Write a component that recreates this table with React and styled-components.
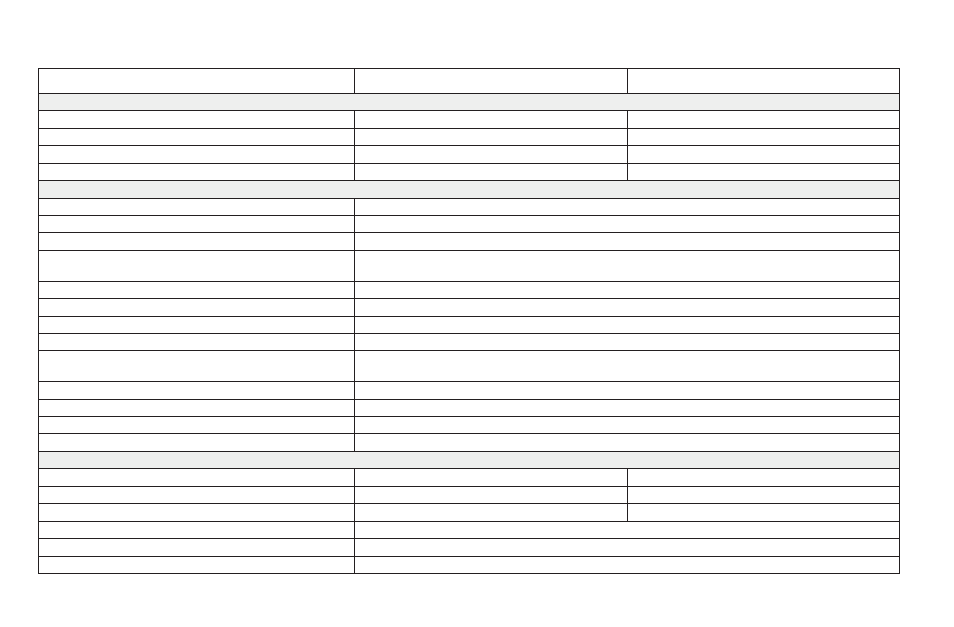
import React from "react";
import styled, { createGlobalStyle } from "styled-components";

const GlobalStyle = createGlobalStyle`
    html, body {
        margin: 0;
        padding: 0;
        background: #ffffff;
        font-family: "Liberation Sans", Arial, sans-serif;
    }
`;

const LINE = '#231f20';

const Page = styled.div`
    padding: 68px 0 0 38px;
    width: 954px;
    height: 627px;
    box-sizing: border-box;
`;

const Grid = styled.div`
    display: flex;
    flex-direction: column;
    gap: 1px;
    width: 862px;
    padding: 1px;
    box-sizing: border-box;
    background: ${LINE};
`;

const Row = styled.div`
    display: grid;
    grid-template-columns: 315px 272px 271px;
    gap: 1px;
    height: ${p => p.$h}px;
`;

const Cell = styled.div`
    grid-column: span ${p => p.$span || 1};
    background: ${p => (p.$section ? '#eeefee' : '#ffffff')};
`;

// layout of the sheet: 'h' header, 's' section band, '3' three columns, '2' label + wide value
const rows = [
    ['h', 24],
    ['s', 16.4],
    ['3', 16.4], ['3', 16.4], ['3', 16.4], ['3', 16.4],
    ['s', 16.6],
    ['2', 16.4], ['2', 16.4], ['2', 16.4], ['2', 30],
    ['2', 16.4], ['2', 16.4], ['2', 16.4], ['2', 16.4], ['2', 30],
    ['2', 16.4], ['2', 16.4], ['2', 16.4], ['2', 16.4],
    ['s', 16.6],
    ['3', 16.4], ['3', 16.4], ['3', 16.4],
    ['2', 16.6], ['2', 16.6], ['2', 16.4],
];

const SpecRow = ({ kind, h }) => {
    if (kind === 's') {
        return (
            <Row $h={h}>
                <Cell $span={3} $section />
            </Row>
        );
    }
    if (kind === '2') {
        return (
            <Row $h={h}>
                <Cell />
                <Cell $span={2} />
            </Row>
        );
    }
    return (
        <Row $h={h}>
            <Cell />
            <Cell />
            <Cell />
        </Row>
    );
};

const App = () => {
    return (
        <>
            <GlobalStyle />
            <Page>
                <Grid>
                    {rows.map(([kind, h], i) => (
                        <SpecRow key={i} kind={kind} h={h} />
                    ))}
                </Grid>
            </Page>
        </>
    );
};

export default App;
